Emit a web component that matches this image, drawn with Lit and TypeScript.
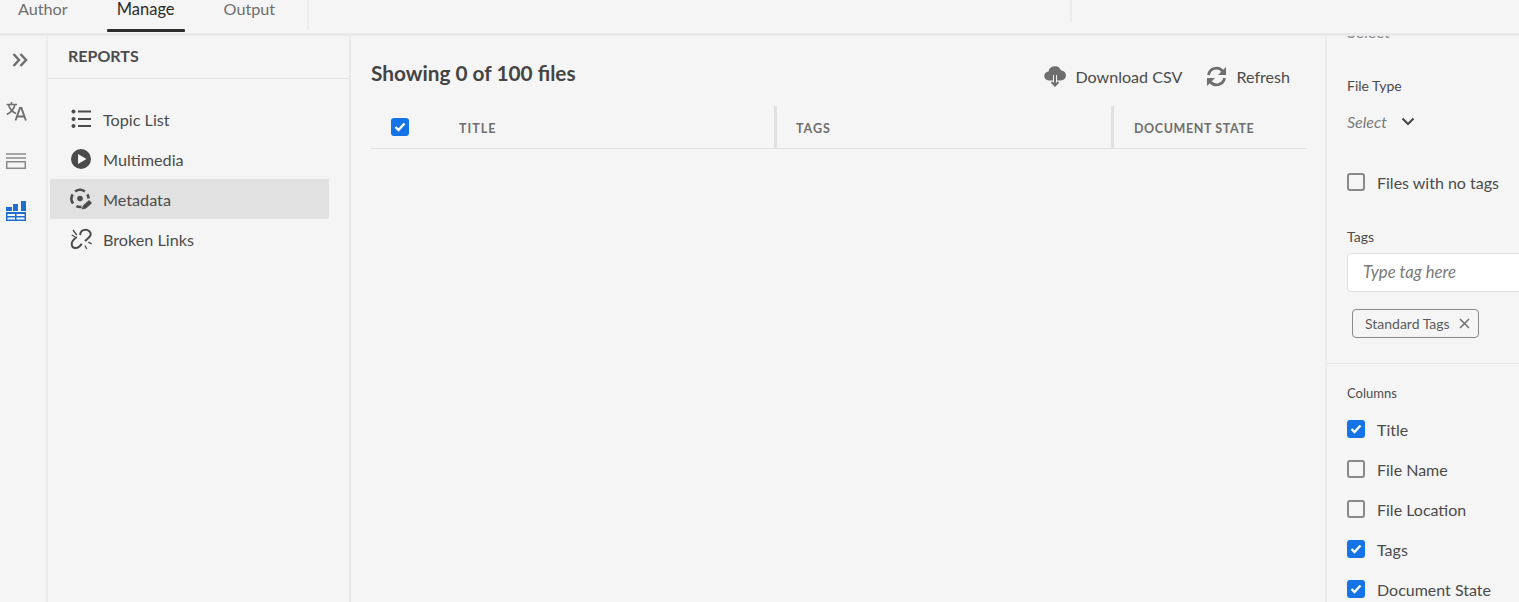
import { LitElement, html, css, svg } from "lit";
import { customElement } from "lit/decorators.js";

const railIcons = [
  svg`<path d="M7.500 4l5.500 6-5.500 6M14.500 4l5.500 6-5.500 6" fill="none" stroke="#6e6e6e" stroke-width="2.500"/>`,
  svg`<path d="M.5 3.500H11M5.500 1v2.500M9 3.500C8 8 5 11.500.8 13.500M2.500 3.500c1 4 4 7.500 7.500 9" fill="none" stroke="#6e6e6e" stroke-width="1.600"/><path d="M9.500 19.500l4.500-12.500h1.400l4.500 12.500M11 15.500h7.400" fill="none" stroke="#6e6e6e" stroke-width="1.900"/>`,
  svg`<path d="M0 2h20M0 6h20" stroke="#8a8a8a" stroke-width="1.500"/><rect x=".75" y="9.750" width="18.500" height="6.500" fill="none" stroke="#8a8a8a" stroke-width="1.500"/>`,
  svg`<path d="M0 6h6v4H0zM7 3h5v7H7zM15 0h5v10h-5z" fill="#1a6fd0"/><path d="M0 11h20v9H0z" fill="#1a6fd0"/><path d="M1.500 13h7.500v2H1.500zM10.500 13H18.500v2h-8zM1.500 16.500h7.500v2H1.500zM10.500 16.500H18.500v2h-8z" fill="#f5f5f5"/>`,
];

const reportIcons = [
  svg`<circle cx="2.500" cy="2.500" r="2" fill="#4b4b4b"/><circle cx="2.500" cy="10" r="2" fill="#4b4b4b"/><circle cx="2.500" cy="17" r="2" fill="#4b4b4b"/><path d="M7 2.500h13M7 10h13M7 17h13" stroke="#4b4b4b" stroke-width="2.200"/>`,
  svg`<circle cx="10" cy="10" r="10" fill="#4b4b4b"/><path d="M7 5l8.500 5-8.500 5z" fill="#f5f5f5"/>`,
  svg`<path d="M4.100 2.500A8.500 8.500 0 0 1 13.900 2.500M2 14.400A8.500 8.500 0 0 1 1.600 5.300M16.400 5.300A8.500 8.500 0 0 1 17.500 9.500M5.400 17.200A8.500 8.500 0 0 0 10.500 17.900" fill="none" stroke="#4b4b4b" stroke-width="2.600"/><circle cx="9" cy="9.500" r="2.800" fill="#4b4b4b"/><path d="M10.700 20.500l1.300-4 6-5.500 3 3-6 5.500z" fill="#4b4b4b"/>`,
  svg`<path d="M9 6c.5-3.500 3-5.200 5.500-5.200 3 0 5.500 2.200 5.200 4.800-.2 2-2.700 3.500-5.700 6.400M5.700 8C3 10 .7 12 .7 14.800c0 2.500 1.600 4.200 3.800 4.200 2.600 0 4.800-1.700 6.200-4.200" fill="none" stroke="#4b4b4b" stroke-width="2"/><path d="M2 1l3.700 5M.7 6l3.300 1.800M14 16.500l1.700 3.500M17.300 13.200l3.400 1.600" stroke="#4b4b4b" stroke-width="1.300"/>`,
];

const reports = ["Topic List", "Multimedia", "Metadata", "Broken Links"];
const columns = [
  { label: "Title", on: true },
  { label: "File Name", on: false },
  { label: "File Location", on: false },
  { label: "Tags", on: true },
  { label: "Document State", on: true },
];

@customElement("app-root")
export class AppRoot extends LitElement {
  static styles = css`
    :host {
      display: flex;
      flex-direction: column;
      height: 602px;
      overflow: hidden;
      background: #f5f5f5;
      color: #4b4b4b;
      font-family: "Lato", "Noto Sans", sans-serif;
      font-size: 16px;
    }
    svg {
      display: block;
      flex: none;
      overflow: visible;
    }
    .topbar {
      display: flex;
      flex: none;
      height: 33px;
      border-bottom: 3px solid #e9e9e9;
    }
    .tabs {
      display: flex;
      width: 307px;
      height: 30px;
      border-right: 2px solid #ececec;
    }
    .tab {
      height: 18px;
      padding: 0 10px;
      line-height: 18px;
      color: #6e6e6e;
      font-size: 16.2px;
    }
    .tab.first {
      margin-left: 8px;
    }
    .tab.active {
      position: relative;
      margin-left: 29px;
      color: #2c2c2c;
      font-size: 16.5px;
    }
    .tab.active::after {
      content: "";
      position: absolute;
      left: 0;
      right: 0;
      top: 29px;
      height: 3px;
      background: #2c2c2c;
      border-radius: 1px;
    }
    .tab.last {
      margin-left: 29px;
    }
    .bar-mark {
      width: 2px;
      height: 22px;
      margin-left: 761px;
      background: #ececec;
    }
    .body {
      display: flex;
      flex: 1;
      min-height: 0;
    }
    .rail {
      display: flex;
      flex-direction: column;
      align-items: flex-start;
      flex: none;
      width: 48px;
      padding: 14px 0 0 6px;
      box-sizing: border-box;
      border-right: 2px solid #ececec;
      gap: 31px;
    }
    .rail svg:last-child {
      margin-top: -2px;
    }
    .reports {
      flex: none;
      width: 303px;
      box-sizing: border-box;
      border-right: 2px solid #e9e9e9;
    }
    .reports h2 {
      margin: 0;
      height: 42px;
      padding-left: 20px;
      line-height: 40px;
      font-size: 16px;
      font-weight: 700;
      border-bottom: 1px solid #e3e3e3;
    }
    .report-list {
      margin: 20px 0 0 2px;
      width: 279px;
    }
    .report {
      display: flex;
      align-items: center;
      height: 40px;
      padding-left: 21px;
      gap: 11px;
      font-size: 16.2px;
    }
    .report.active {
      background: #e1e1e1;
    }
    .main {
      flex: 1;
      min-width: 0;
      padding: 0 19px 0 20px;
    }
    .toolbar {
      display: flex;
      align-items: center;
      height: 70px;
    }
    .count {
      flex: 1;
      padding-top: 2px;
      font-size: 20.8px;
      font-weight: 700;
      color: #444;
    }
    .action {
      display: flex;
      align-items: center;
      gap: 9px;
      margin: 10px 16px 0 24px;
      font-size: 16.1px;
    }
    .action + .action {
      margin-left: 8px;
    }
    .thead {
      display: grid;
      grid-template-columns: 406px 337px 1fr;
      height: 42px;
      border-bottom: 1px solid #e1e1e1;
      font-size: 12.5px;
      font-weight: 700;
      letter-spacing: 1px;
      color: #6e6e6e;
    }
    .th {
      display: flex;
      align-items: center;
      padding: 3px 0 0 19px;
      border-right: 3px solid #e1e1e1;
    }
    .th.title {
      padding-left: 20px;
      gap: 50px;
    }
    .th.title .box {
      margin-top: -4px;
    }
    .th.last {
      padding-left: 20px;
      border-right: 0;
      letter-spacing: 0.6px;
    }
    .filters {
      flex: none;
      width: 194px;
      box-sizing: border-box;
      padding-left: 20px;
      border-left: 2px solid #ececec;
      overflow: hidden;
    }
    .clipped {
      height: 3px;
      overflow: hidden;
      color: #8a8a8a;
    }
    .clipped span {
      display: block;
      margin-top: -13px;
      line-height: 18px;
    }
    .label {
      font-size: 14px;
      line-height: 18px;
    }
    .filetype {
      margin-top: 38px;
    }
    .select {
      display: flex;
      align-items: center;
      gap: 14px;
      margin-top: 16px;
      height: 20px;
      font-style: italic;
      color: #7a7a7a;
    }
    .check {
      display: flex;
      align-items: center;
      gap: 12px;
      height: 40px;
      font-size: 16px;
    }
    .box {
      width: 18px;
      height: 18px;
      flex: none;
      box-sizing: border-box;
      border: 2px solid #8a8a8a;
      border-radius: 3px;
    }
    .box.on {
      display: flex;
      align-items: center;
      justify-content: center;
      background: #1473e6;
      border: 0;
    }
    .no-tags {
      margin-top: 31px;
    }
    .tags-label {
      margin-top: 26px;
    }
    .input {
      height: 39px;
      margin: 7px -20px 0 0;
      padding-left: 15px;
      box-sizing: border-box;
      background: #fff;
      border: 1px solid #e1e1e1;
      border-right: 0;
      border-radius: 4px 0 0 4px;
      line-height: 37px;
      font-size: 16.7px;
      font-style: italic;
      color: #7a7a7a;
    }
    .chip {
      display: flex;
      align-items: center;
      gap: 9px;
      width: 127px;
      height: 29px;
      margin: 17px 0 25px 5px;
      padding-left: 12px;
      box-sizing: border-box;
      border: 1px solid #8a8a8a;
      border-radius: 4px;
      font-size: 14px;
      color: #5c5c5c;
    }
    .divider {
      height: 1px;
      margin-left: -20px;
      background: #e6e6e6;
    }
    .columns {
      margin: 20px 0 7px;
      font-size: 13px;
    }
  `;

  private tick() {
    return html`<svg width="12" height="10" viewBox="0 0 12 10"><path d="M1.500 5l3 3 6-6.500" fill="none" stroke="#fff" stroke-width="2.400"/></svg>`;
  }

  private box(on: boolean) {
    return html`<span class="box ${on ? "on" : ""}">${on ? this.tick() : ""}</span>`;
  }

  render() {
    return html`
      <header class="topbar">
        <nav class="tabs">
          <div class="tab first">Author</div>
          <div class="tab active">Manage</div>
          <div class="tab last">Output</div>
        </nav>
        <div class="bar-mark"></div>
      </header>
      <div class="body">
        <aside class="rail">
          ${railIcons.map(
            (icon) => html`<svg width="20" height="20" viewBox="0 0 20 20">${icon}</svg>`
          )}
        </aside>
        <section class="reports">
          <h2>REPORTS</h2>
          <div class="report-list">
            ${reports.map(
              (name, i) => html`
                <div class="report ${name === "Metadata" ? "active" : ""}">
                  <svg width="21" height="21" viewBox="0 0 21 21">${reportIcons[i]}</svg>
                  <span>${name}</span>
                </div>
              `
            )}
          </div>
        </section>
        <main class="main">
          <div class="toolbar">
            <div class="count">Showing 0 of 100 files</div>
            <div class="action">
              <svg width="22" height="22" viewBox="0 0 22 22">
                <path d="M5 15.500a4.500 4.500 0 0 1-.5-9A6.500 6.500 0 0 1 17 5.500a5 5 0 0 1 0 10h-4V10H9v5.500z" fill="#6e6e6e" />
                <path d="M11 10v10M7.500 17l3.500 3.500 3.500-3.500" fill="none" stroke="#6e6e6e" stroke-width="2" />
              </svg>
              Download CSV
            </div>
            <div class="action">
              <svg width="21" height="21" viewBox="0 0 21 21">
                <path d="M2.500 9A8 8 0 0 1 16.500 5M18.500 12A8 8 0 0 1 4.500 16" fill="none" stroke="#6e6e6e" stroke-width="2.800" />
                <path d="M20 1v8h-8zM1 20v-8h8z" fill="#6e6e6e" />
              </svg>
              Refresh
            </div>
          </div>
          <div class="thead">
            <div class="th title">${this.box(true)}<span>TITLE</span></div>
            <div class="th">TAGS</div>
            <div class="th last">DOCUMENT STATE</div>
          </div>
        </main>
        <aside class="filters">
          <div class="clipped"><span>Select</span></div>
          <div class="label filetype">File Type</div>
          <div class="select">
            Select
            <svg width="14" height="9" viewBox="0 0 14 9"><path d="M1.500 1.500L7 7l5.500-5.500" fill="none" stroke="#4b4b4b" stroke-width="2.200" /></svg>
          </div>
          <div class="check no-tags">${this.box(false)}<span>Files with no tags</span></div>
          <div class="label tags-label">Tags</div>
          <div class="input">Type tag here</div>
          <div class="chip">
            Standard Tags
            <svg width="11" height="11" viewBox="0 0 11 11"><path d="M1 1l9 9M10 1l-9 9" stroke="#6e6e6e" stroke-width="1.500" /></svg>
          </div>
          <div class="divider"></div>
          <div class="label columns">Columns</div>
          ${columns.map(
            (col) => html`<div class="check">${this.box(col.on)}<span>${col.label}</span></div>`
          )}
        </aside>
      </div>
    `;
  }
}
